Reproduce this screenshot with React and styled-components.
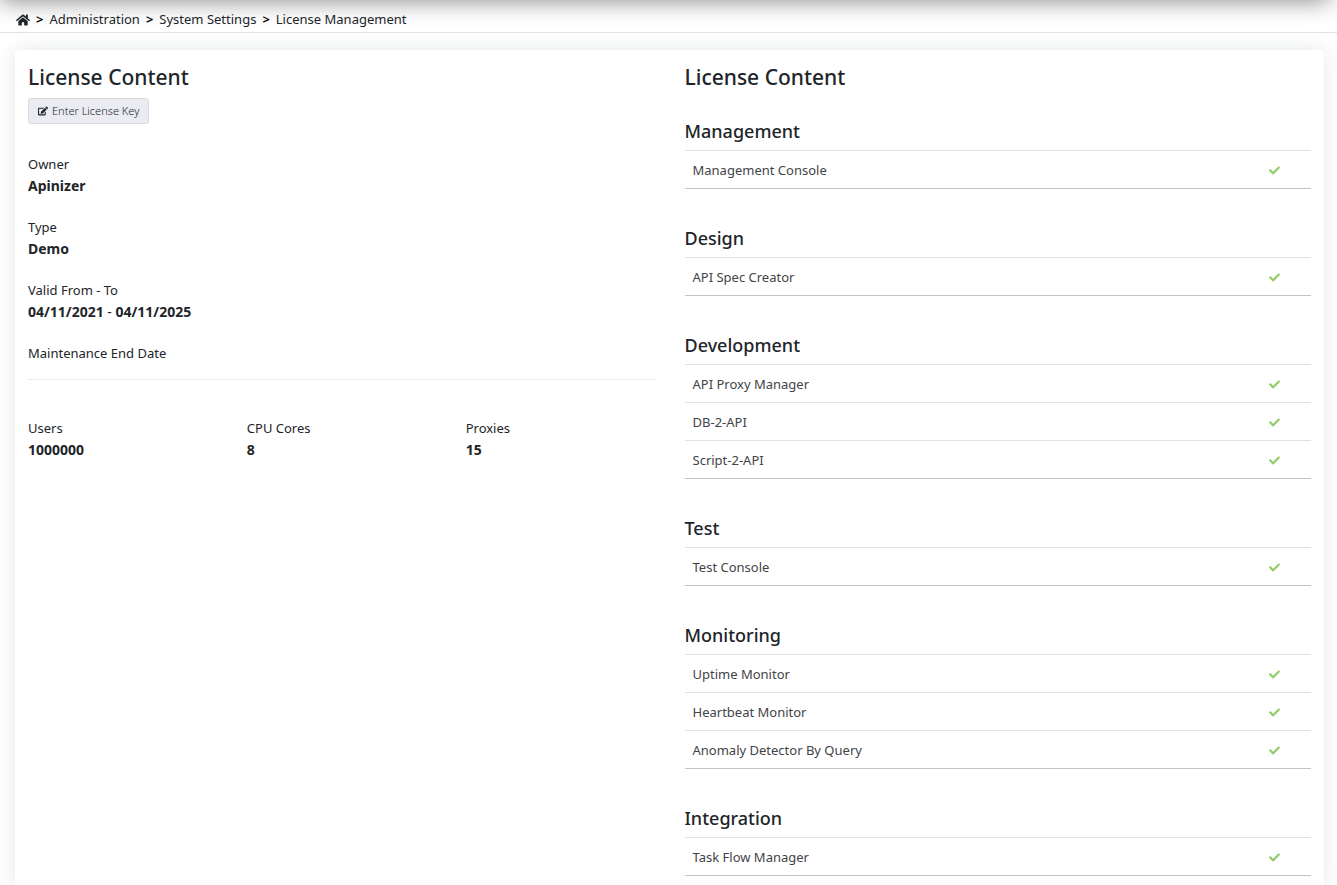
import React from "react";
import styled, { createGlobalStyle } from "styled-components";

import { FaCheck, FaEdit, FaHome } from "react-icons/fa";

const COLORS = {
  text: "#212529",
  cell: "#3f4448",
  line: "#dee2e6",
  barLine: "#dfe0ea",
  tableEnd: "#c0c4c4",
  rule: "#e9eaea",
  button: "#ebecf1",
  buttonBorder: "#d8dae0",
  check: "#92cc68",
};

const GlobalStyle = createGlobalStyle`
  *, *::before, *::after {
    box-sizing: border-box;
  }

  html {
    scrollbar-width: none;
  }

  body {
    margin: 0;
    background-color: white;
    color: ${COLORS.text};
    font-family: "Noto Sans", "Open Sans", sans-serif;
    font-size: 13px;
    line-height: 21px;
  }
`;

const Header = styled.header`
  height: 60px;
  margin: -60px 8px 0 0;
  box-shadow: 0 0 25px rgba(0, 0, 0, 0.5);
`;

const Page = styled.div`
  display: flow-root;
`;

const BreadcrumbBar = styled.nav`
  height: 33px;
  padding: 9px 16px 0;
  border-bottom: 1px solid ${COLORS.barLine};
`;

const Crumbs = styled.ol`
  display: flex;
  align-items: center;
  margin: 0;
  padding: 0;
  list-style: none;
`;

const Crumb = styled.li`
  display: flex;
  align-items: center;

  & + &::before {
    content: ">";
    margin: 0 6px;
    font-weight: 600;
    color: black;
  }
`;

const CrumbLink = styled.a`
  display: flex;
  color: inherit;
  text-decoration: none;
`;

const Card = styled.main`
  display: grid;
  grid-template-columns: 1fr 1fr;
  gap: 30px;
  margin: 17px 13px 20px 15px;
  padding: 13px;
  border-radius: 4px;
  background-color: white;
  box-shadow: 0 0 20px rgba(34, 60, 54, 0.12);
`;

const Title = styled.h1`
  margin: 0;
  font-size: 21px;
  font-weight: 500;
  line-height: 28px;
`;

const KeyButton = styled.button`
  display: flex;
  align-items: center;
  gap: 4px;
  height: 26px;
  margin: 7px 0 30px;
  padding: 0 9px;
  border: 1px solid ${COLORS.buttonBorder};
  border-radius: 3px;
  background-color: ${COLORS.button};
  color: ${COLORS.text};
  font: inherit;
  font-size: 11px;
  font-weight: 300;
  line-height: 20px;
`;

const Details = styled.dl`
  display: grid;
  gap: 21px;
  margin: 0;
`;

const Counts = styled(Details)`
  grid-template-columns: repeat(3, 1fr);
  gap: 30px;
`;

const Value = styled.dd`
  margin: 0;
  font-size: 14px;
  font-weight: 700;
`;

const Dash = styled.span`
  font-weight: 400;
`;

const Rule = styled.hr`
  height: 1px;
  margin: 15px 0 38px;
  border: 0;
  background-color: ${COLORS.rule};
`;

const Group = styled.section`
  margin-top: 38px;

  ${Title} + & {
    margin-top: 29px;
  }
`;

const GroupTitle = styled.h2`
  margin: 0 0 8px;
  font-size: 18px;
  font-weight: 500;
  line-height: 22px;
`;

const Table = styled.table`
  width: 100%;
  border-collapse: collapse;
  border-bottom: 1px solid ${COLORS.tableEnd};
  color: ${COLORS.cell};
`;

const Cell = styled.td`
  height: 38px;
  padding: 2px 8px 0;
  border-top: 1px solid ${COLORS.line};
`;

const StatusCell = styled(Cell)`
  width: 74px;
  text-align: center;
  color: ${COLORS.check};

  svg {
    display: block;
    margin: 0 auto;
  }
`;

const details = [
  { label: "Owner", value: "Apinizer" },
  { label: "Type", value: "Demo" },
  {
    label: "Valid From - To",
    value: (
      <>
        04/11/2021 <Dash>-</Dash> 04/11/2025
      </>
    ),
  },
  { label: "Maintenance End Date" },
];

const counts = [
  { label: "Users", value: "1000000" },
  { label: "CPU Cores", value: "8" },
  { label: "Proxies", value: "15" },
];

const groups = [
  { title: "Management", modules: ["Management Console"] },
  { title: "Design", modules: ["API Spec Creator"] },
  {
    title: "Development",
    modules: ["API Proxy Manager", "DB-2-API", "Script-2-API"],
  },
  { title: "Test", modules: ["Test Console"] },
  {
    title: "Monitoring",
    modules: ["Uptime Monitor", "Heartbeat Monitor", "Anomaly Detector By Query"],
  },
  { title: "Integration", modules: ["Task Flow Manager"] },
];

const Field = ({ label, value }) => (
  <div>
    <dt>{label}</dt>
    {value && <Value>{value}</Value>}
  </div>
);

const ModuleGroup = ({ title, modules }) => (
  <Group>
    <GroupTitle>{title}</GroupTitle>
    <Table aria-label={title}>
      <tbody>
        {modules.map((name) => (
          <tr key={name}>
            <Cell>{name}</Cell>
            <StatusCell>
              <FaCheck size={11} title='Licensed' />
            </StatusCell>
          </tr>
        ))}
      </tbody>
    </Table>
  </Group>
);

const App = () => (
  <Page>
    <GlobalStyle />
    <Header />
    <BreadcrumbBar aria-label='Breadcrumb'>
      <Crumbs>
        <Crumb>
          <CrumbLink href='#home' aria-label='Home'>
            <FaHome size={14} />
          </CrumbLink>
        </Crumb>
        {["Administration", "System Settings", "License Management"].map((c) => (
          <Crumb key={c}>
            <CrumbLink href='#'>{c}</CrumbLink>
          </Crumb>
        ))}
      </Crumbs>
    </BreadcrumbBar>
    <Card>
      <section>
        <Title>License Content</Title>
        <KeyButton type='button'>
          <FaEdit size={10} />
          Enter License Key
        </KeyButton>
        <Details>
          {details.map((d) => (
            <Field key={d.label} {...d} />
          ))}
        </Details>
        <Rule />
        <Counts>
          {counts.map((c) => (
            <Field key={c.label} {...c} />
          ))}
        </Counts>
      </section>
      <section>
        <Title>License Content</Title>
        {groups.map((g) => (
          <ModuleGroup key={g.title} {...g} />
        ))}
      </section>
    </Card>
  </Page>
);

export default App;
